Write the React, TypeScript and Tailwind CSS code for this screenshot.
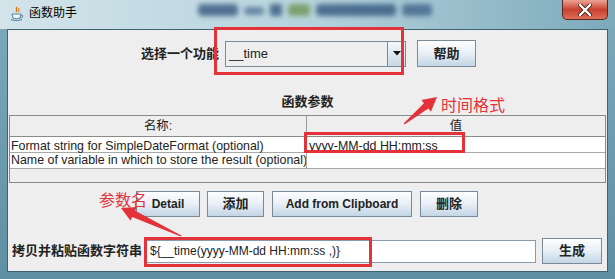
import React from "react";

const CJK = '"Liberation Sans", "Noto Sans CJK SC", sans-serif';

function arrowPoints(tx: number, ty: number, hx: number, hy: number) {
  const dx = hx - tx;
  const dy = hy - ty;
  const len = Math.sqrt(dx * dx + dy * dy);
  const ux = dx / len;
  const uy = dy / len;
  const px = -uy;
  const py = ux;
  const headLen = 14;
  const headW = 7.5;
  const shaftEnd = 3.5;
  const bx = hx - ux * headLen;
  const by = hy - uy * headLen;
  const pts = [
    [tx + px * 0.7, ty + py * 0.7],
    [bx + px * shaftEnd, by + py * shaftEnd],
    [bx + px * headW, by + py * headW],
    [hx, hy],
    [bx - px * headW, by - py * headW],
    [bx - px * shaftEnd, by - py * shaftEnd],
    [tx - px * 0.7, ty - py * 0.7],
  ];
  return pts.map((p) => `${p[0].toFixed(1)},${p[1].toFixed(1)}`).join(" ");
}

function JavaIcon() {
  return (
    <svg width="16" height="16" viewBox="0 0 16 16">
      <path d="M8 1 C6 3 9 4 7 6" stroke="#e76f00" strokeWidth="1.3" fill="none" />
      <path d="M10 2 C9 3.5 11 4.5 9.5 6" stroke="#e76f00" strokeWidth="1" fill="none" />
      <path d="M3 8 L12 8 L11 12 Q7.5 13.5 4 12 Z" fill="#f3f6fa" stroke="#5382a1" strokeWidth="1" />
      <path d="M12 9 Q14.5 9 13.5 11 Q12.8 12 11 11.8" stroke="#5382a1" strokeWidth="1" fill="none" />
      <path d="M2 13.5 Q7.5 15.5 13 13.5" stroke="#5382a1" strokeWidth="1.2" fill="none" />
    </svg>
  );
}

function OceanButton({ children, className = "" }: { children: React.ReactNode; className?: string }) {
  return (
    <div
      className={`flex items-center justify-center border border-[#7a8a99] bg-gradient-to-b from-[#fdfeff] via-[#e8eff6] to-[#c3d5e5] text-[#222] font-bold whitespace-nowrap ${className}`}
    >
      {children}
    </div>
  );
}

export default function App() {
  return (
    <div
      className="relative w-[615px] h-[279px] overflow-hidden bg-gradient-to-b from-[#7eaabb] to-[#5f8fa3] flex flex-col"
      style={{ fontFamily: CJK }}
    >
      {/* Title bar */}
      <div className="relative h-[29px] flex items-center bg-gradient-to-r from-[#d3e4ea] via-[#b6d3dd] to-[#7caabb]">
        <div className="ml-[9px] mt-[-2px]">
          <JavaIcon />
        </div>
        <span className="ml-[4px] mt-[-3px] text-[12px] text-black">函数助手</span>
        {/* blurred background through glass */}
        <div className="absolute left-[198px] top-[4px] w-[246px] h-[14px] flex gap-[6px] blur-[2.5px] opacity-75">
          <div className="w-[40px] h-[12px] bg-[#2c4f78] rounded-sm" />
          <div className="w-[20px] h-[8px] mt-[3px] bg-[#4a6d90] rounded-sm" />
          <div className="w-[12px] h-[12px] bg-[#2c4f78]" />
          <div className="w-[22px] h-[12px] bg-[#6a8f4a] rounded-sm" />
          <div className="w-[80px] h-[12px] bg-[#2c4f78] rounded-sm" />
          <div className="w-[30px] h-[12px] bg-[#3a5e86] rounded-sm" />
        </div>
        {/* close button */}
        <div className="absolute left-[562px] top-0 w-[46px] h-[20px] rounded-b-[5px] border border-t-0 border-[#5a2a22] bg-gradient-to-b from-[#e9a496] via-[#c9402f] to-[#dc6e58] flex items-center justify-center">
          <svg width="14" height="12" viewBox="0 0 14 12">
            <path d="M2 1 L12 11 M12 1 L2 11" stroke="#4a2018" strokeWidth="4" strokeLinecap="round" />
            <path d="M2 1 L12 11 M12 1 L2 11" stroke="#ffffff" strokeWidth="2.4" strokeLinecap="round" />
          </svg>
        </div>
      </div>

      {/* Client area */}
      <div className="mx-[7px] h-[243px] border border-[#3e6272] bg-[#eeeeee] flex flex-col">
        {/* row 1 */}
        <div className="mt-[10px] h-[27px] flex items-center pl-[133px]">
          <span className="w-[77px] text-right text-[13px] font-bold text-[#222] whitespace-nowrap">选择一个功能</span>
          <div className="ml-[7px] w-[181px] h-[26px] border border-[#7a8a99] bg-[#eeeeee] flex">
            <div className="flex-1 flex items-center pl-[3px] text-[13px] text-[#222]">__time</div>
            <div className="w-[18px] border-l border-[#7a8a99] bg-gradient-to-b from-[#f4f8fb] to-[#c8d8e6] flex items-center justify-center">
              <svg width="8" height="5" viewBox="0 0 8 5">
                <path d="M0 0 L8 0 L4 4.5 Z" fill="#111" />
              </svg>
            </div>
          </div>
          <OceanButton className="ml-[11px] w-[59px] h-[27px] text-[13px]">帮助</OceanButton>
        </div>

        {/* title */}
        <div className="mt-[26px] h-[18px] leading-[18px] text-center text-[13px] font-bold text-[#222]">函数参数</div>

        {/* table */}
        <div className="mt-[4px] ml-[1px] w-[597px] h-[68px] border border-[#8a8a8a] bg-[#eeeeee] flex flex-col text-[12.4px] text-[#222]">
          <div className="h-[21px] grid grid-cols-[297px_1fr] border-b border-[#8a8a8a]">
            <div className="flex items-center justify-center border-r border-[#9a9a9a]">名称:</div>
            <div className="flex items-center justify-center">值</div>
          </div>
          <div className="h-[16px] grid grid-cols-[297px_1fr] bg-white border-b border-[#a8a8a8]">
            <div className="flex items-center pl-[1px] border-r border-[#a8a8a8] whitespace-nowrap overflow-hidden">
              Format string for SimpleDateFormat (optional)
            </div>
            <div className="flex items-center pl-[2px] whitespace-nowrap">yyyy-MM-dd HH:mm:ss</div>
          </div>
          <div className="h-[16px] grid grid-cols-[297px_1fr] bg-white border-b border-[#a8a8a8]">
            <div className="flex items-center pl-[1px] border-r border-[#a8a8a8] whitespace-nowrap overflow-hidden">
              Name of variable in which to store the result (optional)
            </div>
            <div />
          </div>
          <div className="flex-1" />
        </div>

        {/* buttons row */}
        <div className="mt-[8px] h-[26px] flex items-center pl-[128px]">
          <OceanButton className="w-[64px] h-[26px] text-[12px]">Detail</OceanButton>
          <OceanButton className="ml-[7px] w-[57px] h-[26px] text-[13px]">添加</OceanButton>
          <OceanButton className="ml-[8px] w-[140px] h-[26px] text-[12px]">Add from Clipboard</OceanButton>
          <OceanButton className="ml-[8px] w-[58px] h-[26px] text-[13px]">删除</OceanButton>
        </div>

        {/* bottom row */}
        <div className="mt-[21px] h-[26px] flex items-center">
          <span className="ml-[4px] w-[131px] text-[13px] font-bold text-[#222] whitespace-nowrap">拷贝并粘贴函数字符串</span>
          <div className="ml-[3px] w-[390px] h-[23px] border border-[#8a9aaa] bg-white flex items-center pl-[3px] text-[12px] text-[#222] whitespace-nowrap">
            {"${__time(yyyy-MM-dd HH:mm:ss ,)}"}
          </div>
          <OceanButton className="ml-[6px] w-[60px] h-[26px] text-[13px]">生成</OceanButton>
        </div>
      </div>

      {/* annotations */}
      <div className="absolute left-[214px] top-[27px] w-[190px] h-[48px] border-[3px] border-[#e4323a]" />
      <div className="absolute left-[304px] top-[132px] w-[161px] h-[21px] border-[3px] border-[#e4323a]" />
      <div className="absolute left-[144px] top-[237px] w-[228px] h-[30px] border-[3px] border-[#e4323a]" />
      <div className="absolute left-[441px] top-[94px] text-[16px] leading-[20px] text-[#e4323a]" style={{ fontFamily: '"Noto Sans CJK SC", sans-serif' }}>
        时间格式
      </div>
      <div className="absolute left-[99px] top-[189px] text-[16px] leading-[20px] text-[#e4323a]" style={{ fontFamily: '"Noto Sans CJK SC", sans-serif' }}>
        参数名
      </div>
      <svg className="absolute left-0 top-0" width="615" height="279" viewBox="0 0 615 279">
        <polygon points={arrowPoints(404, 124, 437, 97)} fill="#e4323a" />
        <polygon points={arrowPoints(181, 236, 121, 208)} fill="#e4323a" />
      </svg>
    </div>
  );
}
